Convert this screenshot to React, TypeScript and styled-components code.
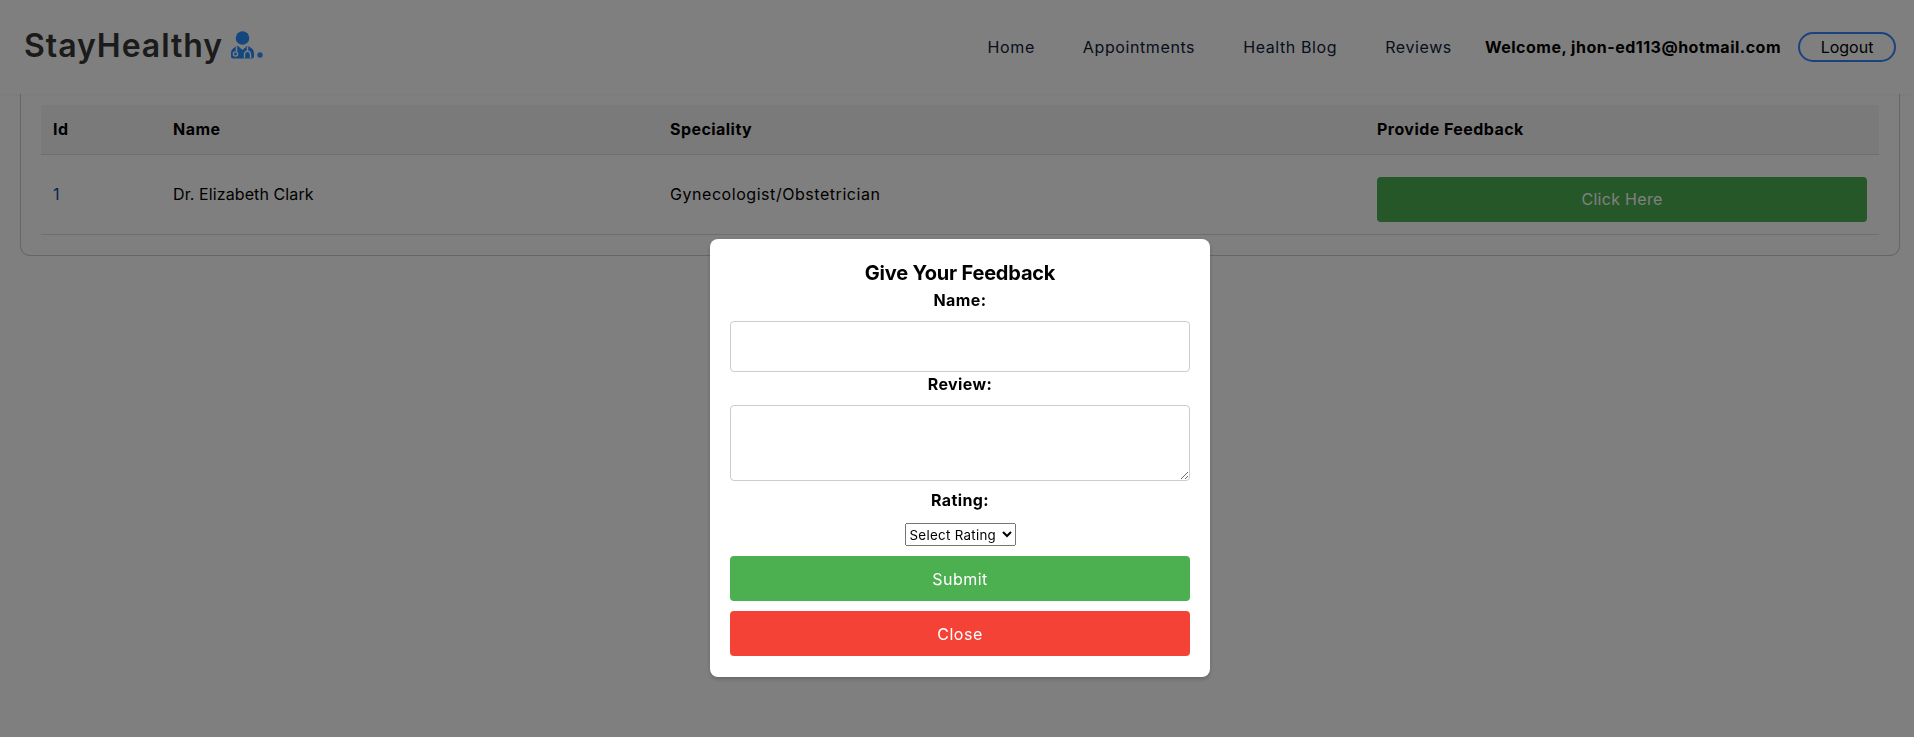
import React from 'react';
import styled, {createGlobalStyle} from 'styled-components';

const GlobalStyle = createGlobalStyle`
  html, body {
    margin: 0;
    padding: 0;
    height: 100%;
    background: #fff;
    overflow: hidden;
  }
  * {
    box-sizing: border-box;
  }
  body {
    font-family: Inter, "Noto Sans", sans-serif;
    color: #000;
  }
`

const DoctorLogo = () => (
    <svg width="34" height="30" viewBox="0 0 34 30" aria-hidden="true">
        <circle cx="12.5" cy="7" r="6.8" fill="#2a8fff"/>
        <path d="M1 25.5 V22 C1 18 5 15.5 8 15 L12.5 19 L17 15 C20 15.5 24 18 24 22 V25.5 Q24 27.5 22 27.5 H3 Q1 27.5 1 25.5 Z" fill="#2a8fff"/>
        <path d="M6.5 15.5 V20.5" stroke="#fff" strokeWidth="1.5" fill="none"/>
        <circle cx="5.5" cy="23" r="2.1" fill="none" stroke="#fff" strokeWidth="1.4"/>
        <path d="M14.5 27 V24 C14.5 21.6 15.8 20.2 17.5 20.2 C19.2 20.2 20.5 21.6 20.5 24 V27" fill="none" stroke="#fff" strokeWidth="1.4"/>
        <path d="M17.5 20.2 V15.5" stroke="#fff" strokeWidth="1.4" fill="none"/>
        <circle cx="30" cy="24" r="2.7" fill="#3a90ff"/>
    </svg>
)

const columns = [
    {title: 'Id', width: 120},
    {title: 'Name', width: 497},
    {title: 'Speciality', width: 707},
    {title: 'Provide Feedback', width: 514},
]

const links = ['Home', 'Appointments', 'Health Blog', 'Reviews']

const App = () => {
    return (
        <Page>
            <GlobalStyle/>
            <Navbar>
                <Logo>
                    StayHealthy
                    <DoctorLogo/>
                </Logo>
                <NavLinks>
                    {links.map(l => <NavLink key={l} href="#">{l}</NavLink>)}
                </NavLinks>
                <Welcome>Welcome, jhon-ed113@hotmail.com</Welcome>
                <LogoutButton>Logout</LogoutButton>
            </Navbar>
            <Card>
                <Table>
                    <thead>
                    <tr>
                        {columns.map(c => <Th key={c.title} $width={c.width}>{c.title}</Th>)}
                    </tr>
                    </thead>
                    <tbody>
                    <tr>
                        <Td $blue>1</Td>
                        <Td $tracking={0.1}>Dr. Elizabeth Clark</Td>
                        <Td $tracking={0.55}>Gynecologist/Obstetrician</Td>
                        <Td><FeedbackButton>Click Here</FeedbackButton></Td>
                    </tr>
                    </tbody>
                </Table>
            </Card>
            <Overlay>
                <Modal>
                    <ModalTitle>Give Your Feedback</ModalTitle>
                    <Label $gap={9}>Name:</Label>
                    <TextInput type="text"/>
                    <Label $gap={9}>Review:</Label>
                    <TextArea/>
                    <Label $top={7} $gap={11}>Rating:</Label>
                    <RatingSelect defaultValue="">
                        <option value="">Select Rating</option>
                        <option value="1">1</option>
                        <option value="2">2</option>
                        <option value="3">3</option>
                        <option value="4">4</option>
                        <option value="5">5</option>
                    </RatingSelect>
                    <ModalButton color="#4caf50">Submit</ModalButton>
                    <ModalButton color="#f44336">Close</ModalButton>
                </Modal>
            </Overlay>
        </Page>
    );
};

export default App;

const Page = styled.div`
  height: 737px;
`
const Navbar = styled.nav`
  display: flex;
  align-items: center;
  height: 94px;
  padding: 0 18px 0 24px;
  background: #fff;
  box-shadow: 0 1px 4px rgba(0, 0, 0, 0.05);
  position: relative;
`
const Logo = styled.div`
  display: flex;
  align-items: center;
  gap: 7px;
  padding-bottom: 3px;
  font-size: 32px;
  font-weight: 600;
  color: #363636;
  letter-spacing: 0.95px;
  margin-right: auto;
`
const NavLinks = styled.div`
  display: flex;
  gap: 48px;
  margin-right: 33px;
  padding-bottom: 1px;
`
const NavLink = styled.a`
  font-size: 16px;
  font-weight: 400;
  letter-spacing: 0.6px;
  color: #0f2038;
  text-decoration: none;
`
const Welcome = styled.span`
  font-size: 16px;
  font-weight: 700;
  letter-spacing: 0.5px;
  color: #000;
  margin-right: 17px;
`
const LogoutButton = styled.button`
  width: 98px;
  height: 30px;
  padding: 0;
  border: 2px solid #3685fb;
  border-radius: 15px;
  background: #fff;
  font-family: inherit;
  font-size: 16px;
  color: #000;
`
const Card = styled.section`
  margin: 0 14px 0 20px;
  padding: 11px 21px 21px 20px;
  height: 162px;
  border: 1px solid #ccc;
  border-top: none;
  border-radius: 0 0 10px 10px;
`
const Table = styled.table`
  width: 100%;
  border-collapse: collapse;
  table-layout: fixed;
`
const Th = styled.th<{ $width: number }>`
  width: ${props => props.$width}px;
  height: 49px;
  padding: 0 12px;
  background: #f5f5f5;
  border-bottom: 1px solid #ddd;
  text-align: left;
  font-size: 16px;
  font-weight: 700;
  letter-spacing: 0.45px;
`
const Td = styled.td<{ $blue?: boolean, $tracking?: number }>`
  height: 80px;
  padding: 0 12px;
  border-bottom: 1px solid #ddd;
  font-size: 16px;
  letter-spacing: ${props => props.$tracking || 0}px;
  color: ${props => props.$blue ? '#0a4aa0' : '#000'};
`
const FeedbackButton = styled.button`
  display: block;
  width: 100%;
  height: 45px;
  margin-top: 10px;
  border: none;
  border-radius: 4px;
  background: #4caf50;
  color: #fff;
  font-family: inherit;
  font-size: 16px;
  letter-spacing: 0.3px;
`
const Overlay = styled.div`
  position: fixed;
  inset: 0;
  display: flex;
  justify-content: center;
  align-items: flex-start;
  padding: 239px 0 0 6px;
  background: rgba(0, 0, 0, 0.5);
`
const Modal = styled.form`
  display: flex;
  flex-direction: column;
  align-items: center;
  width: 500px;
  height: 438px;
  padding: 20px;
  background: #fff;
  border-radius: 8px;
  box-shadow: 0 2px 4px rgba(0, 0, 0, 0.2);

  > * {
    flex: none;
  }
`
const ModalTitle = styled.h2`
  margin: 0;
  height: 29px;
  line-height: 29px;
  font-size: 20px;
  font-weight: 700;
  letter-spacing: -0.2px;
  color: #000;
`
const Label = styled.label<{ $gap: number, $top?: number }>`
  display: block;
  margin-top: ${props => props.$top || 0}px;
  margin-bottom: ${props => props.$gap}px;
  line-height: 24px;
  height: 24px;
  font-size: 16px;
  font-weight: 700;
  letter-spacing: 0.4px;
  color: #000;
`
const TextInput = styled.input`
  width: 100%;
  height: 51px;
  border: 1px solid #ccc;
  border-radius: 4px;
`
const TextArea = styled.textarea`
  display: block;
  width: 100%;
  height: 76px;
  border: 1px solid #ccc;
  border-radius: 4px;
`
const RatingSelect = styled.select`
  width: 111px;
  height: 23px;
  margin-bottom: 10px;
  font-family: inherit;
  font-size: 13.33px;
  letter-spacing: 0.3px;
`
const ModalButton = styled.button<{ color: string }>`
  width: 100%;
  height: 45px;
  margin-bottom: 10px;
  border: none;
  border-radius: 4px;
  background: ${props => props.color};
  color: #fff;
  font-family: inherit;
  font-size: 16px;
  letter-spacing: 0.5px;
`
